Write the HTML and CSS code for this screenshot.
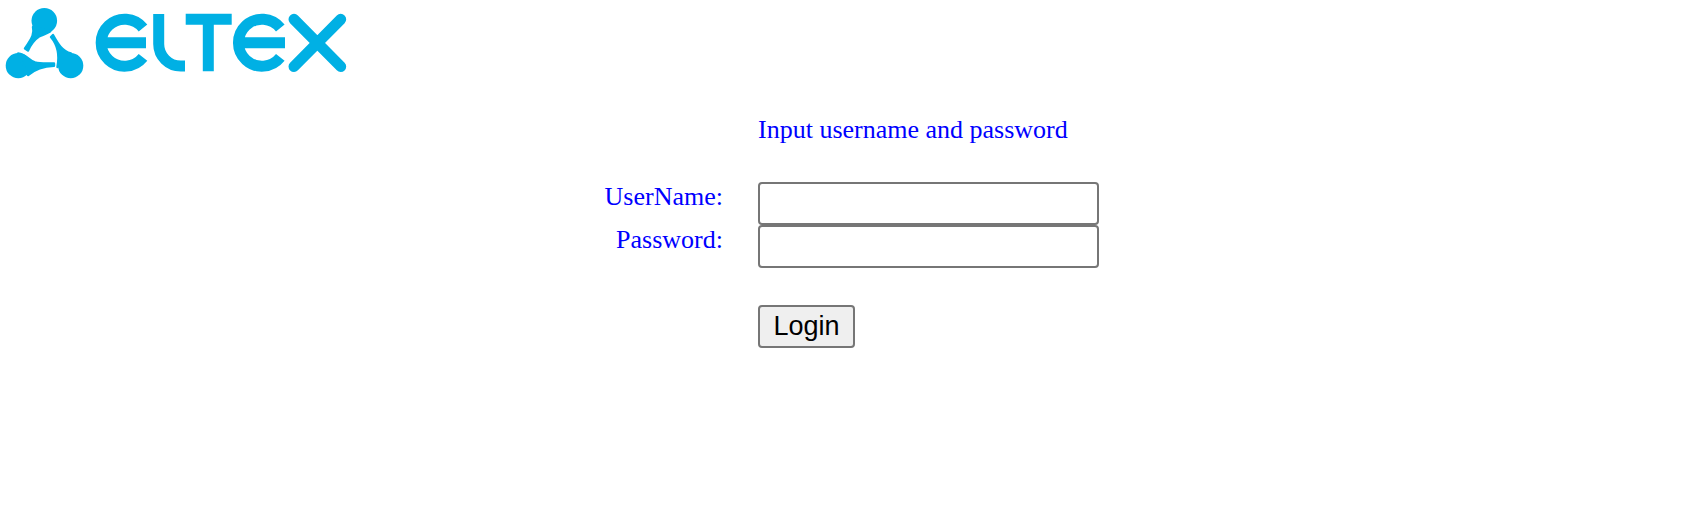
FILE: index.html
```html
<!DOCTYPE html>
<html lang="en">
<head>
    <meta charset="UTF-8">
    <meta name="viewport" content="width=device-width, initial-scale=1.0">
    <title>Login</title>
    <link rel="stylesheet" href="styles.css">
</head>
<body>

<div class="header">
    <svg class="logo" viewBox="0 0 360 90" width="360" height="90" aria-label="ELTEX">
        <g class="logo-mark">
            <circle cx="44.3" cy="20.7" r="12.8"/>
            <path class="logo-tail" d="M33 27 C34.500 33 33 37 25 48.500 L28 50.500 C30 46 33 40.500 39 36.500 C43 34.500 46 34 50 31.500 Z"/>
            <circle cx="18.3" cy="65.7" r="12.6"/>
            <path class="logo-tail" d="M18 53.500 C26 54 28 60 35 62.500 C40 64 47 63.500 54 63.500 L54 65.700 C44 66 36 68 28 75 Z"/>
            <circle cx="70.700" cy="65.700" r="12.600"/>
            <path class="logo-tail" d="M71 53.500 C62 51 58 44 53 35 L51 37 C57 44 60 54 57.500 67 Z"/>
        </g>
        <g class="logo-word">
            <path d="M143 28 A23.500 23.500 0 1 0 143 57.400 M100 42.700 H146"/>
            <path d="M158.700 14 V44 A22 22 0 0 0 180.700 66 H185"/>
            <path d="M185.700 19.200 H231.700 M208.300 19 V71.300"/>
            <path d="M280.300 28 A23.500 23.500 0 1 0 280.300 57.400 M237 42.700 H285"/>
        </g>
        <path class="logo-x" d="M294 19.300 L340.700 66.500 M340.700 19.300 L294 66.500"/>
    </svg>
</div>

<form class="login">
    <div></div>
    <p class="hint">Input username and password</p>

    <label for="username">UserName:</label>
    <input type="text" id="username">

    <label for="password">Password:</label>
    <input type="password" id="password">

    <div></div>
    <button type="button">Login</button>
</form>

</body>
</html>
```

FILE: styles.css
```css
body {
    margin: 0;
    background-color: #fff;
    font-family: "Liberation Serif", "Times New Roman", serif;
    font-size: 26px;
    color: #00f;
}
.header {
    height: 90px;
}
.logo {
    display: block;
    filter: blur(0.4px);
}
.logo-mark {
    fill: #00b0e4;
}
.logo-tail {
    stroke: #00b0e4;
    stroke-width: 2.4;
    stroke-linejoin: round;
}
.logo-word {
    fill: none;
    stroke: #00b0e4;
    stroke-width: 11;
}
.logo-x {
    fill: none;
    stroke: #00b0e4;
    stroke-width: 11;
    stroke-linecap: round;
}
.login {
    display: grid;
    grid-template-columns: 723px 341px;
    column-gap: 35px;
    padding-top: 25px;
}
.hint {
    margin: 0 0 37px;
    line-height: 30px;
}
label {
    text-align: right;
    line-height: 30px;
}
input {
    box-sizing: border-box;
    width: 341px;
    height: 43px;
    padding: 1px 2px;
    border: 2px solid #767676;
    border-radius: 4px;
    font-size: 26px;
}
button {
    box-sizing: border-box;
    width: 97px;
    height: 43px;
    margin-top: 37px;
    padding: 0;
    background-color: #efefef;
    border: 2px solid #767676;
    border-radius: 4px;
    font-family: "Liberation Sans", Arial, sans-serif;
    font-size: 27px;
    color: #000;
}
```
